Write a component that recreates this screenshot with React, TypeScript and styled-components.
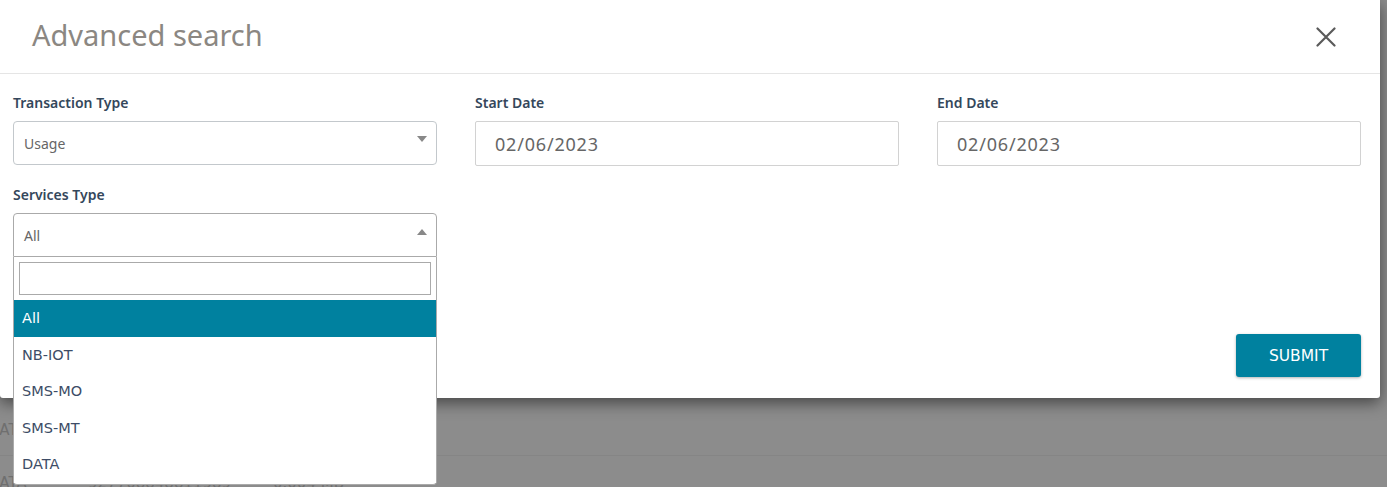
import styled, {createGlobalStyle} from "styled-components"

const GlobalStyle = createGlobalStyle`
    html, body {
        margin: 0;
        padding: 0;
        background: #8c8c8c;
        overflow: hidden;
    }
    * {
        box-sizing: border-box;
    }
`

const Page = styled.div`
    width: 1387px;
    height: 487px;
    position: relative;
    overflow: hidden;
    background: #8c8c8c;
    font-family: "Noto Sans", sans-serif;
`

const BackTable = styled.div`
    padding-top: 403px;
    display: flex;
    flex-direction: column;
`

const BackRow = styled.div`
    height: 53px;
    display: flex;
    align-items: center;
    padding-top: 1px;
    border-bottom: 1px solid #858585;
    color: #6f6f6f;
    font-family: "DejaVu Sans", sans-serif;
    font-size: 15px;
`

const BackCell = styled.span<{w: number}>`
    width: ${(p) => p.w}px;
    flex-shrink: 0;
    white-space: nowrap;
`

const Modal = styled.div`
    position: absolute;
    top: 0;
    left: 0;
    width: 1380px;
    height: 398px;
    background: #fff;
    border-radius: 0 0 3px 3px;
    box-shadow: 0 5px 15px rgba(0, 0, 0, 0.5);
`

const Header = styled.div`
    height: 74px;
    display: flex;
    align-items: center;
    justify-content: space-between;
    padding: 0 43px 4px 32px;
    border-bottom: 1px solid #e5e5e5;
`

const Title = styled.h4`
    margin: 0;
    font-weight: 400;
    font-size: 29px;
    color: #8b8782;
`

const CloseButton = styled.button`
    border: none;
    background: none;
    padding: 0;
    width: 22px;
    height: 22px;
    margin-top: 4px;
    display: flex;
    align-items: center;
    justify-content: center;
    cursor: pointer;
`

const Body = styled.div`
    padding: 20px 19px 0 13px;
    display: flex;
    flex-direction: column;
`

const Grid = styled.div`
    display: grid;
    grid-template-columns: repeat(3, 424px);
    column-gap: 38px;
    row-gap: 20px;
`

const Field = styled.div`
    display: flex;
    flex-direction: column;
    gap: 9px;
    position: relative;
`

const Label = styled.label`
    font-size: 14px;
    font-weight: 600;
    color: #34475b;
    line-height: 18px;
`

const SelectBox = styled.div<{open?: boolean}>`
    height: 44px;
    border: 1px solid ${(p) => (p.open ? "#aaa" : "#c3c8cc")};
    border-radius: ${(p) => (p.open ? "4px 4px 0 0" : "4px")};
    display: flex;
    align-items: center;
    justify-content: space-between;
    padding: 0 9px 0 10px;
    font-size: 14px;
    color: #666;
`

const Arrow = styled.span<{up?: boolean}>`
    width: 0;
    height: 0;
    border-left: 5px solid transparent;
    border-right: 5px solid transparent;
    ${(p) =>
        p.up
            ? "border-bottom: 6px solid #888; margin-top: -7px;"
            : "border-top: 6px solid #888; margin-top: -8px;"}
`

const DateInput = styled.div`
    height: 45px;
    border: 1px solid #d2d2d2;
    border-radius: 2px;
    display: flex;
    align-items: center;
    padding: 0 19px;
    font-size: 18px;
    letter-spacing: 0.8px;
    color: #666;
`

const Dropdown = styled.div`
    position: absolute;
    top: 71px;
    left: 0;
    width: 424px;
    background: #fff;
    border: 1px solid #aaa;
    border-top: none;
    border-radius: 0 0 4px 4px;
    z-index: 5;
    padding-bottom: 1px;
`

const SearchWrap = styled.div`
    padding: 5px 5px 5px;
`

const SearchInput = styled.input`
    width: 100%;
    height: 33px;
    border: 1px solid #aaa;
    outline: none;
`

const Option = styled.div<{selected?: boolean}>`
    height: 36.5px;
    display: flex;
    align-items: center;
    padding: 0 8px;
    font-family: "DejaVu Sans", Verdana, sans-serif;
    font-size: 14.5px;
    color: ${(p) => (p.selected ? "#fff" : "#3d4c66")};
    background: ${(p) => (p.selected ? "#00819f" : "#fff")};
`

const Footer = styled.div`
    display: flex;
    justify-content: flex-end;
    padding-top: 77px;
`

const SubmitButton = styled.button`
    width: 125px;
    height: 43px;
    border: none;
    border-radius: 3px;
    background: #00819f;
    color: #fff;
    font-family: "DejaVu Sans", Verdana, sans-serif;
    font-size: 15.5px;
    box-shadow: 0 1px 3px rgba(0, 0, 0, 0.3);
    cursor: pointer;
`

const services = ["All", "NB-IOT", "SMS-MO", "SMS-MT", "DATA"]

export default function App() {
    return (
        <>
            <GlobalStyle />
            <Page>
                <BackTable>
                    <BackRow>
                        <BackCell w={100} style={{marginLeft: -12}}>DATA</BackCell>
                    </BackRow>
                    <BackRow>
                        <BackCell w={100} style={{marginLeft: -12}}>DATA</BackCell>
                        <BackCell w={185}>927708848811989</BackCell>
                        <BackCell w={120}>0.004 MB</BackCell>
                    </BackRow>
                </BackTable>
                <Modal>
                    <Header>
                        <Title>Advanced search</Title>
                        <CloseButton aria-label="close">
                            <svg width="20" height="20" viewBox="0 0 20 20">
                                <path
                                    d="M1.5 1.5 L18.5 18.5 M18.5 1.5 L1.5 18.5"
                                    stroke="#5a5a5a"
                                    strokeWidth="2.2"
                                    strokeLinecap="round"
                                />
                            </svg>
                        </CloseButton>
                    </Header>
                    <Body>
                        <Grid>
                            <Field>
                                <Label>Transaction Type</Label>
                                <SelectBox>
                                    Usage
                                    <Arrow />
                                </SelectBox>
                            </Field>
                            <Field>
                                <Label>Start Date</Label>
                                <DateInput>02/06/2023</DateInput>
                            </Field>
                            <Field>
                                <Label>End Date</Label>
                                <DateInput>02/06/2023</DateInput>
                            </Field>
                            <Field>
                                <Label>Services Type</Label>
                                <SelectBox open>
                                    All
                                    <Arrow up />
                                </SelectBox>
                                <Dropdown>
                                    <SearchWrap>
                                        <SearchInput />
                                    </SearchWrap>
                                    {services.map((s, i) => (
                                        <Option key={s} selected={i === 0}>
                                            {s}
                                        </Option>
                                    ))}
                                </Dropdown>
                            </Field>
                        </Grid>
                        <Footer>
                            <SubmitButton>SUBMIT</SubmitButton>
                        </Footer>
                    </Body>
                </Modal>
            </Page>
        </>
    )
}
